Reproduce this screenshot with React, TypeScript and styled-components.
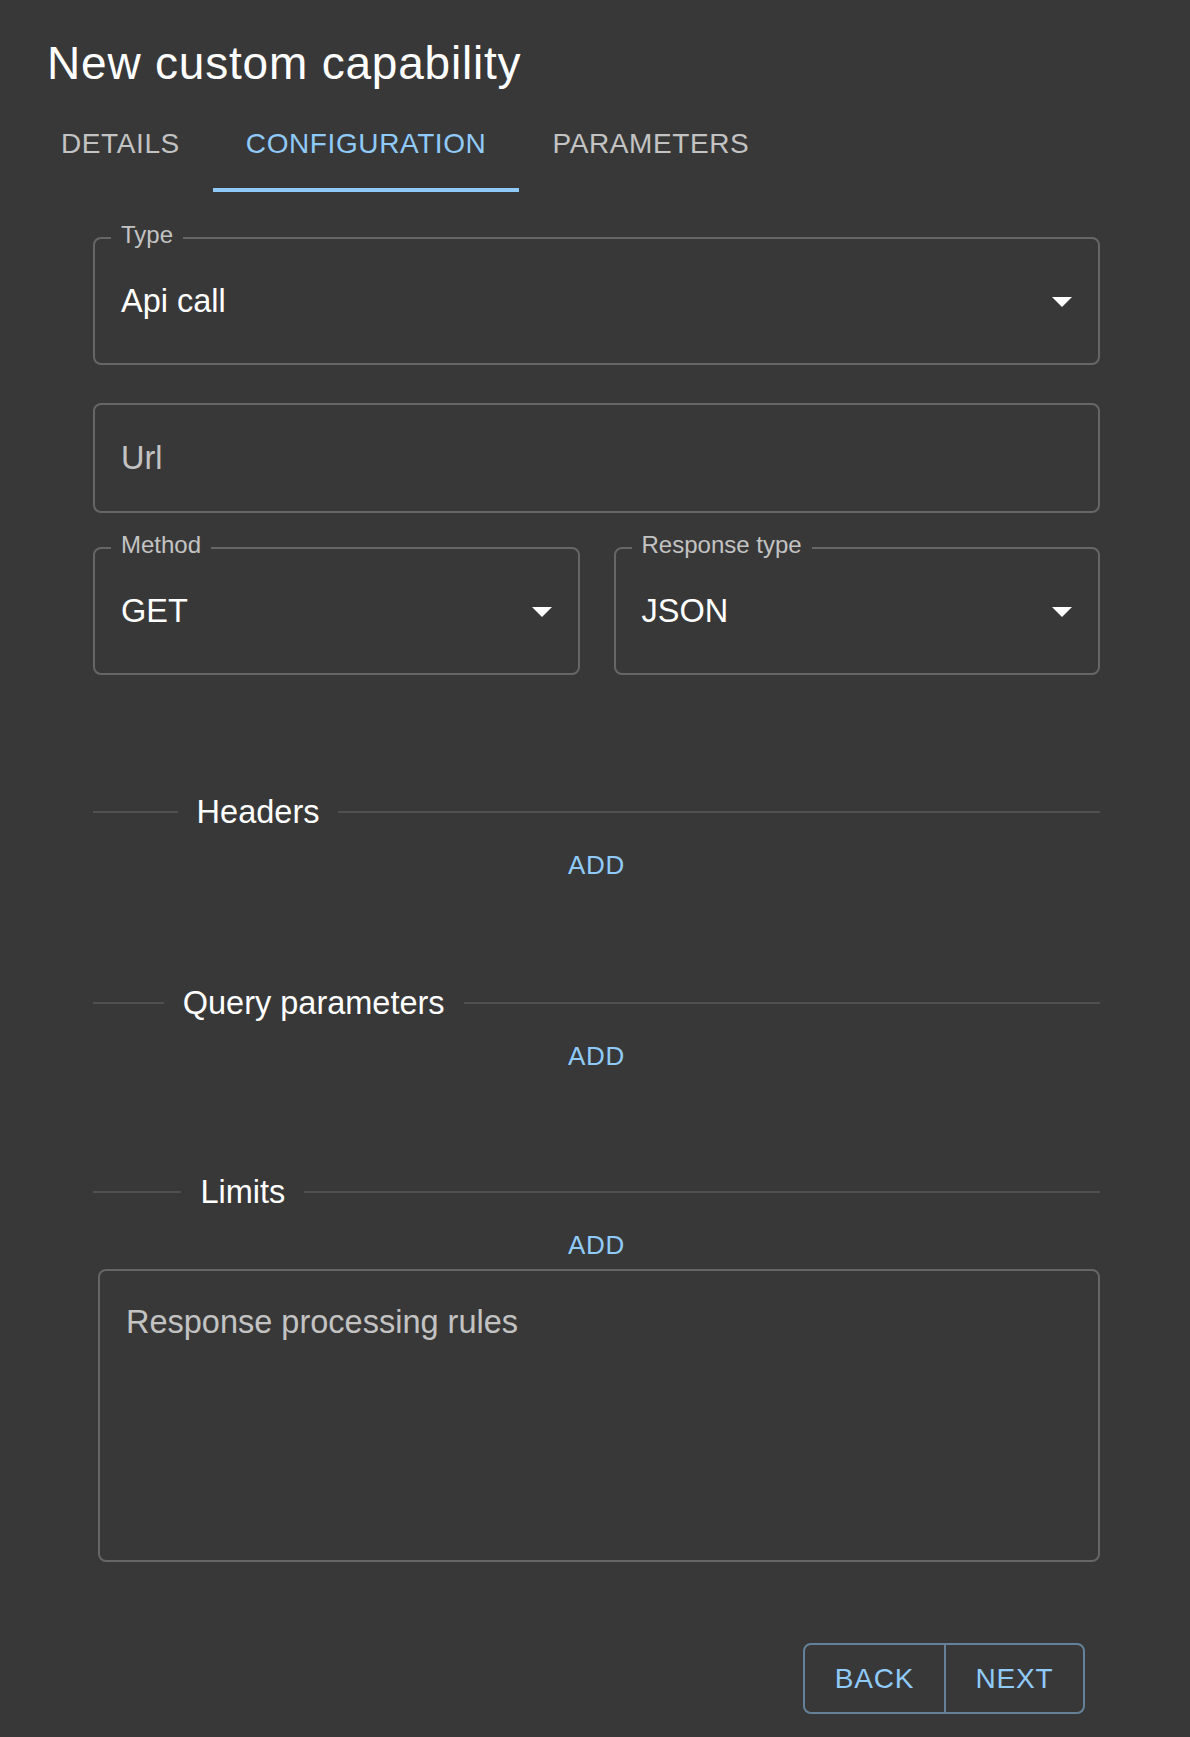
import React from "react";
import styled, { createGlobalStyle } from "styled-components";

const GlobalStyle = createGlobalStyle`
  html, body {
    margin: 0;
    padding: 0;
    background: #383838;
  }
  * {
    box-sizing: border-box;
  }
`;

const Page = styled("div")`
  width: 1190px;
  min-height: 1737px;
  background: #383838;
  font-family: "Liberation Sans", Arial, Helvetica, sans-serif;
  color: #ffffff;
  padding-bottom: 23px;
`;

const Title = styled("h2")`
  margin: 0;
  padding: 35px 0 5px 47px;
  font-size: 46px;
  line-height: 56px;
  font-weight: 400;
  letter-spacing: 0.8px;
`;

const TabBar = styled("div")`
  display: flex;
  height: 96px;
  padding-left: 28px;
`;

const Tab = styled("button")<{ $active?: boolean }>`
  display: flex;
  align-items: center;
  height: 96px;
  padding: 3px 33px 0;
  background: none;
  border: none;
  border-bottom: 4px solid ${(p) => (p.$active ? "#90caf9" : "transparent")};
  color: ${(p) => (p.$active ? "#90caf9" : "#c3c3c3")};
  font-family: inherit;
  font-size: 28px;
  letter-spacing: 0.6px;
  text-transform: uppercase;
  cursor: pointer;
`;

const Form = styled("div")`
  padding: 45px 90px 0 93px;
`;

const Field = styled("div")<{ $height: number; $top?: number }>`
  position: relative;
  display: flex;
  align-items: center;
  height: ${(p) => p.$height}px;
  margin-top: ${(p) => p.$top ?? 0}px;
  padding: 0 26px;
  border: 2px solid #666666;
  border-radius: 8px;
`;

const FloatLabel = styled("span")`
  position: absolute;
  top: -16px;
  left: 16px;
  padding: 0 10px;
  background: #383838;
  color: #c3c3c3;
  font-size: 24px;
  line-height: 24px;
`;

const Value = styled("span")<{ $muted?: boolean }>`
  flex: 1;
  font-size: 32.5px;
  line-height: 46px;
  color: ${(p) => (p.$muted ? "#c3c3c3" : "#ffffff")};
`;

const Row = styled("div")`
  display: grid;
  grid-template-columns: 1fr 1fr;
  gap: 34px;
  margin-top: 34px;
`;

const Divider = styled("div")<{ $top: number }>`
  display: flex;
  align-items: center;
  height: 48px;
  margin-top: ${(p) => p.$top}px;

  &::before,
  &::after {
    content: "";
    border-top: 2px solid #505050;
  }
  &::before {
    width: 10%;
  }
  &::after {
    width: 90%;
  }
`;

const DividerText = styled("span")`
  flex-shrink: 0;
  padding: 0 19px;
  white-space: nowrap;
  font-size: 32.5px;
  line-height: 48px;
  color: #ffffff;
`;

const AddRow = styled("div")`
  display: flex;
  justify-content: center;
  align-items: center;
  height: 48px;
  margin-top: 5px;
`;

const AddButton = styled("button")`
  background: none;
  border: none;
  padding: 8px 12px;
  color: #90caf9;
  font-family: inherit;
  font-size: 26px;
  letter-spacing: 0.7px;
  cursor: pointer;
`;

const TextArea = styled("div")`
  height: 293px;
  margin-left: 5px;
  padding: 28px 26px;
  border: 2px solid #666666;
  border-radius: 8px;
  color: #c3c3c3;
  font-size: 32.5px;
  line-height: 46px;
`;

const Actions = styled("div")`
  display: flex;
  justify-content: flex-end;
  margin-top: 81px;
  padding-right: 15px;
`;

const ButtonGroup = styled("div")`
  display: flex;
  border: 2px solid rgba(144, 202, 249, 0.5);
  border-radius: 8px;
  overflow: hidden;
`;

const GroupButton = styled("button")`
  width: 139px;
  height: 67px;
  background: none;
  border: none;
  color: #90caf9;
  font-family: inherit;
  font-size: 28px;
  letter-spacing: 0.8px;
  cursor: pointer;

  & + & {
    border-left: 2px solid rgba(144, 202, 249, 0.5);
  }
`;

const Arrow = () => (
  <svg width="20" height="10" viewBox="0 0 10 5" style={{ marginTop: 2 }}>
    <path d="M0 0l5 5 5-5z" fill="#ffffff" />
  </svg>
);

const Select = ({ label, value, top }: { label: string; value: string; top?: number }) => (
  <Field $height={128} $top={top}>
    <FloatLabel>{label}</FloatLabel>
    <Value>{value}</Value>
    <Arrow />
  </Field>
);

const Section = ({ title, top }: { title: string; top: number }) => (
  <>
    <Divider $top={top}>
      <DividerText>{title}</DividerText>
    </Divider>
    <AddRow>
      <AddButton>ADD</AddButton>
    </AddRow>
  </>
);

export default function App() {
  return (
    <Page>
      <GlobalStyle />
      <Title>New custom capability</Title>
      <TabBar>
        <Tab>Details</Tab>
        <Tab $active>Configuration</Tab>
        <Tab>Parameters</Tab>
      </TabBar>
      <Form>
        <Select label="Type" value="Api call" />
        <Field $height={110} $top={38}>
          <Value $muted>Url</Value>
        </Field>
        <Row>
          <Select label="Method" value="GET" />
          <Select label="Response type" value="JSON" />
        </Row>
        <Section title="Headers" top={113} />
        <Section title="Query parameters" top={90} />
        <Section title="Limits" top={88} />
        <TextArea>Response processing rules</TextArea>
        <Actions>
          <ButtonGroup>
            <GroupButton>BACK</GroupButton>
            <GroupButton>NEXT</GroupButton>
          </ButtonGroup>
        </Actions>
      </Form>
    </Page>
  );
}
